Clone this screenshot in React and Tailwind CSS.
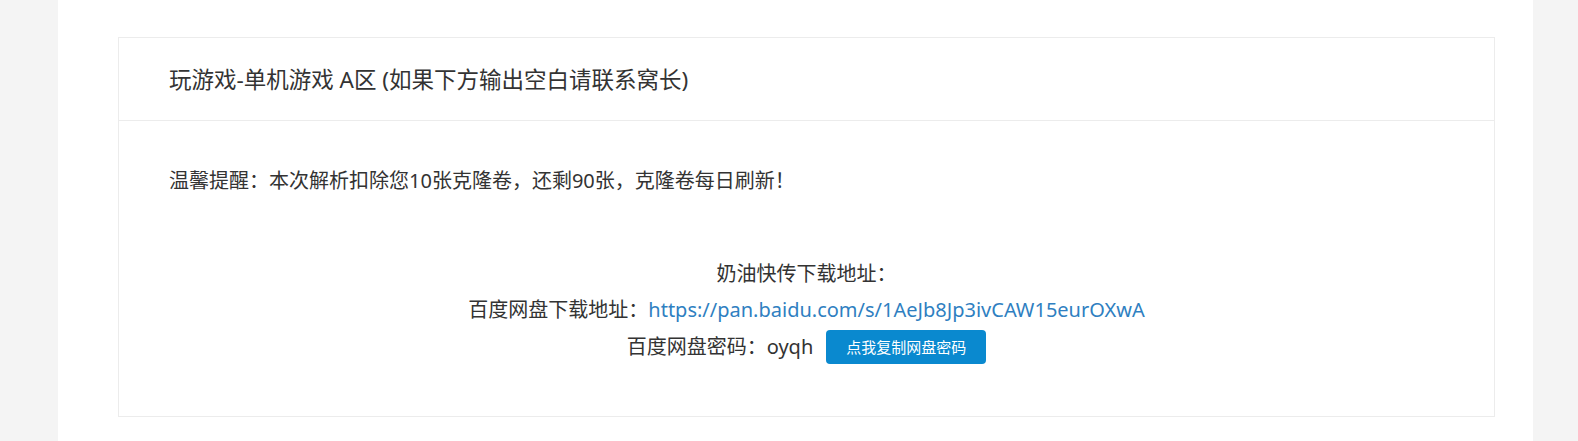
import React from 'react';

const font = { fontFamily: '"Segoe UI", "Noto Sans", "Noto Sans CJK SC", sans-serif' };

const App = () => {
  const copyPwd = () => {
    if (navigator.clipboard) navigator.clipboard.writeText('oyqh').catch(() => {});
  };

  return (
    <div className="min-h-[441px] bg-[#f4f4f4] pl-[58px] pr-[45px] flex text-[#333]" style={font}>
      <div className="flex-1 bg-white pt-[37px] pl-[60px] pr-[38px] pb-[28px]">
        <div className="border border-[#ececec] bg-white">
          <div className="h-[83px] border-b border-[#ececec] px-[50px] flex items-center">
            <h3 className="text-[22.5px] text-[#333] pt-[2px]">玩游戏-单机游戏 A区 (如果下方输出空白请联系窝长)</h3>
          </div>
          <div className="px-[50px] pt-[46px] pb-[50px] text-[20px]">
            <p className="leading-[28px]">温馨提醒：本次解析扣除您10张克隆卷，还剩90张，克隆卷每日刷新！</p>
            <div className="mt-[61px] text-center">
              <div className="leading-[36px]">奶油快传下载地址：</div>
              <div className="leading-[36px]">
                百度网盘下载地址：
                <a href="#" className="text-[#2f7fc1]">https://pan.baidu.com/s/1AeJb8Jp3ivCAW15eurOXwA</a>
              </div>
              <div className="h-[38px] flex items-center justify-center">
                <span>百度网盘密码：oyqh</span>
                <button
                  type="button"
                  onClick={copyPwd}
                  className="ml-[13px] h-[34px] px-[20px] rounded-[4px] bg-[#0a89cf] text-white text-[15px] leading-none"
                >
                  点我复制网盘密码
                </button>
              </div>
            </div>
          </div>
        </div>
      </div>
    </div>
  );
};

export default App;
